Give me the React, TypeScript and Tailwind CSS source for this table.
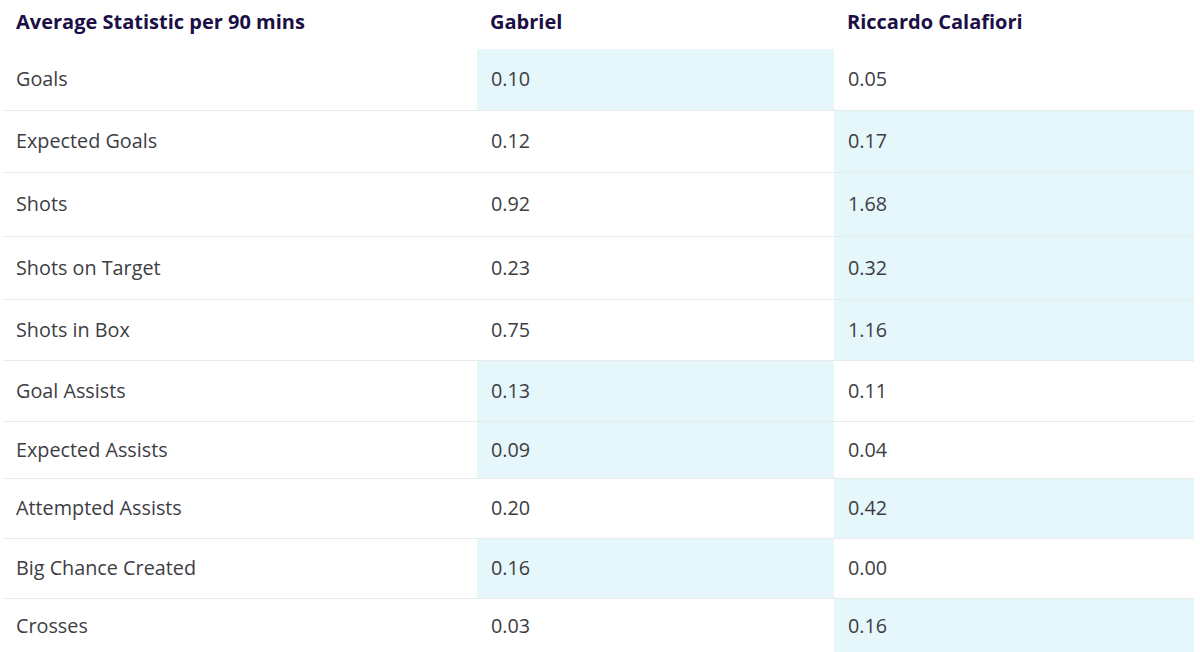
import React from "react";

type Row = {
  label: string;
  a: string;
  b: string;
  h: string;
};

// which column leads is highlighted
const rows: Row[] = [
  { label: "Goals", a: "0.10", b: "0.05", h: "h-[61px]" },
  { label: "Expected Goals", a: "0.12", b: "0.17", h: "h-[62px]" },
  { label: "Shots", a: "0.92", b: "1.68", h: "h-[64px]" },
  { label: "Shots on Target", a: "0.23", b: "0.32", h: "h-[63px]" },
  { label: "Shots in Box", a: "0.75", b: "1.16", h: "h-[61px]" },
  { label: "Goal Assists", a: "0.13", b: "0.11", h: "h-[61px]" },
  { label: "Expected Assists", a: "0.09", b: "0.04", h: "h-[57px]" },
  { label: "Attempted Assists", a: "0.20", b: "0.42", h: "h-[60px]" },
  { label: "Big Chance Created", a: "0.16", b: "0.00", h: "h-[60px]" },
  { label: "Crosses", a: "0.03", b: "0.16", h: "h-[56px]" },
];

export default function App() {
  return (
    <div className="min-h-screen bg-white pl-[3px] pr-[6px] font-['Open_Sans','Noto_Sans',sans-serif]">
      <table className="w-full border-collapse table-fixed">
        <colgroup>
          <col className="w-[474px]" />
          <col className="w-[357px]" />
          <col />
        </colgroup>
        <thead>
          <tr className="h-[49px] text-left text-[20px] font-bold text-[#1b0f45]">
            <th className="px-[13px] pb-[6px] font-bold">Average Statistic per 90 mins</th>
            <th className="px-[13px] pb-[6px] font-bold">Gabriel</th>
            <th className="px-[13px] pb-[6px] font-bold">Riccardo Calafiori</th>
          </tr>
        </thead>
        <tbody>
          {rows.map((r) => {
            const aWins = parseFloat(r.a) > parseFloat(r.b);
            const bWins = parseFloat(r.b) > parseFloat(r.a);
            return (
              <tr key={r.label} className={`${r.h} border-b border-[#e9eaec] text-[19.8px] text-[#3d3d44]`}>
                <td className="px-[13px]">{r.label}</td>
                <td className={`px-[14px] ${aWins ? "bg-[#e5f7fa]" : ""}`}>{r.a}</td>
                <td className={`px-[14px] ${bWins ? "bg-[#e5f7fa]" : ""}`}>{r.b}</td>
              </tr>
            );
          })}
        </tbody>
      </table>
    </div>
  );
}
